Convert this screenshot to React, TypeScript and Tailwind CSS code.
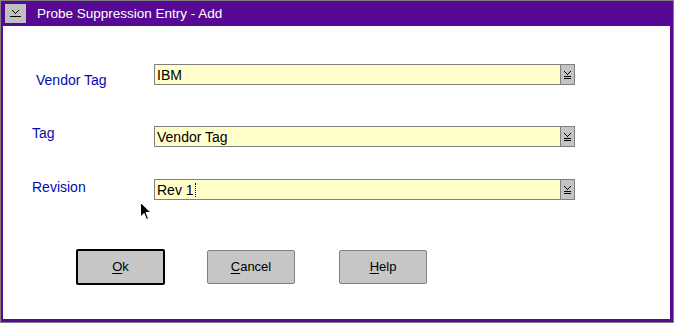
const fontStyle = "font-['Liberation_Sans',Arial,sans-serif]";

function DropIcon() {
  return (
    <svg width="7" height="8" viewBox="0 0 7 8" shapeRendering="crispEdges">
      <rect x="0" y="0" width="1" height="1" fill="#000" />
      <rect x="6" y="0" width="1" height="1" fill="#000" />
      <rect x="1" y="1" width="1" height="1" fill="#000" />
      <rect x="5" y="1" width="1" height="1" fill="#000" />
      <rect x="2" y="2" width="1" height="1" fill="#000" />
      <rect x="4" y="2" width="1" height="1" fill="#000" />
      <rect x="3" y="3" width="1" height="1" fill="#000" />
      <rect x="0" y="5" width="7" height="1" fill="#000" />
      <rect x="0" y="7" width="7" height="1" fill="#000" />
    </svg>
  );
}

function SysMenuIcon() {
  return (
    <svg width="11" height="7" viewBox="0 0 11 7" shapeRendering="crispEdges">
      <rect x="2" y="0" width="1" height="1" fill="#000" />
      <rect x="8" y="0" width="1" height="1" fill="#000" />
      <rect x="3" y="1" width="1" height="1" fill="#000" />
      <rect x="7" y="1" width="1" height="1" fill="#000" />
      <rect x="4" y="2" width="1" height="1" fill="#000" />
      <rect x="6" y="2" width="1" height="1" fill="#000" />
      <rect x="5" y="3" width="1" height="1" fill="#000" />
      <rect x="0" y="6" width="11" height="1" fill="#000" />
    </svg>
  );
}

function Combo({ value, caret }: { value: string; caret?: boolean }) {
  return (
    <div className="flex h-[21px] w-[421px] shrink-0 border border-[#808080] bg-[#ffffcc]">
      <div className="flex flex-1 items-center pl-[2px] text-[14px] leading-[16px] text-black">
        {value}
        {caret && <span className="ml-[1px] h-[14px] border-l border-dotted border-black" />}
      </div>
      <div className="flex w-[14px] items-center justify-center border-l border-[#808080] bg-[#c4c4c4]">
        <DropIcon />
      </div>
    </div>
  );
}

function Btn({ label, rest, isDefault }: { label: string; rest: string; isDefault?: boolean }) {
  return (
    <div
      className={
        isDefault
          ? 'flex h-[36px] w-[89px] items-center justify-center rounded-[2px] border-2 border-black bg-[#c6c6c6]'
          : 'flex h-[34px] w-[88px] items-center justify-center rounded-[2px] border border-[#808080] bg-[#c6c6c6]'
      }
    >
      <span className="text-[13px] text-black">
        <span className="underline underline-offset-2">{label}</span>
        {rest}
      </span>
    </div>
  );
}

export default function App() {
  return (
    <div className={`${fontStyle} h-[323px] w-[674px] bg-[#808080] p-px`}>
      <div className="flex h-full flex-col bg-[#560a93] pb-[3px] pl-[2px] pr-[3px]">
        <div className="flex h-[25px] items-start">
          <div className="mt-[3px] ml-[2px] flex h-[19px] w-[21px] items-center justify-center bg-[#c0c0c0]">
            <SysMenuIcon />
          </div>
          <div className="ml-[11px] mt-[5px] text-[13.5px] leading-[15px] text-white">
            Probe Suppression Entry - Add
          </div>
        </div>
        <div className="relative flex-1 bg-white pt-[38px]">
          <div className="flex h-[21px] items-start">
            <div className="mt-[8px] w-[151px] shrink-0 pl-[33px] text-[14px] leading-[16px] text-[#0808b0]">Vendor Tag</div>
            <Combo value="IBM" />
          </div>
          <div className="mt-[41px] flex h-[21px] items-start">
            <div className="-mt-[1px] w-[151px] shrink-0 pl-[29px] text-[14px] leading-[16px] text-[#0808b0]">Tag</div>
            <Combo value="Vendor Tag" />
          </div>
          <div className="mt-[32px] flex h-[21px] items-start">
            <div className="w-[151px] shrink-0 pl-[29px] text-[14px] leading-[16px] text-[#0808b0]">Revision</div>
            <Combo value="Rev 1" caret />
          </div>
          <div className="mt-[49px] flex items-center pl-[73px]">
            <Btn label="O" rest="k" isDefault />
            <div className="ml-[42px]">
              <Btn label="C" rest="ancel" />
            </div>
            <div className="ml-[44px]">
              <Btn label="H" rest="elp" />
            </div>
          </div>
          <svg
            className="absolute left-[137px] top-[176px]"
            width="12"
            height="19"
            viewBox="0 0 12 19"
          >
            <path d="M0.5 0.5 L0.5 15 L4 11.5 L6.5 17.5 L8.5 16.5 L6 10.5 L11 10.5 Z" fill="#000" stroke="#fff" strokeWidth="1" />
          </svg>
        </div>
      </div>
    </div>
  );
}
